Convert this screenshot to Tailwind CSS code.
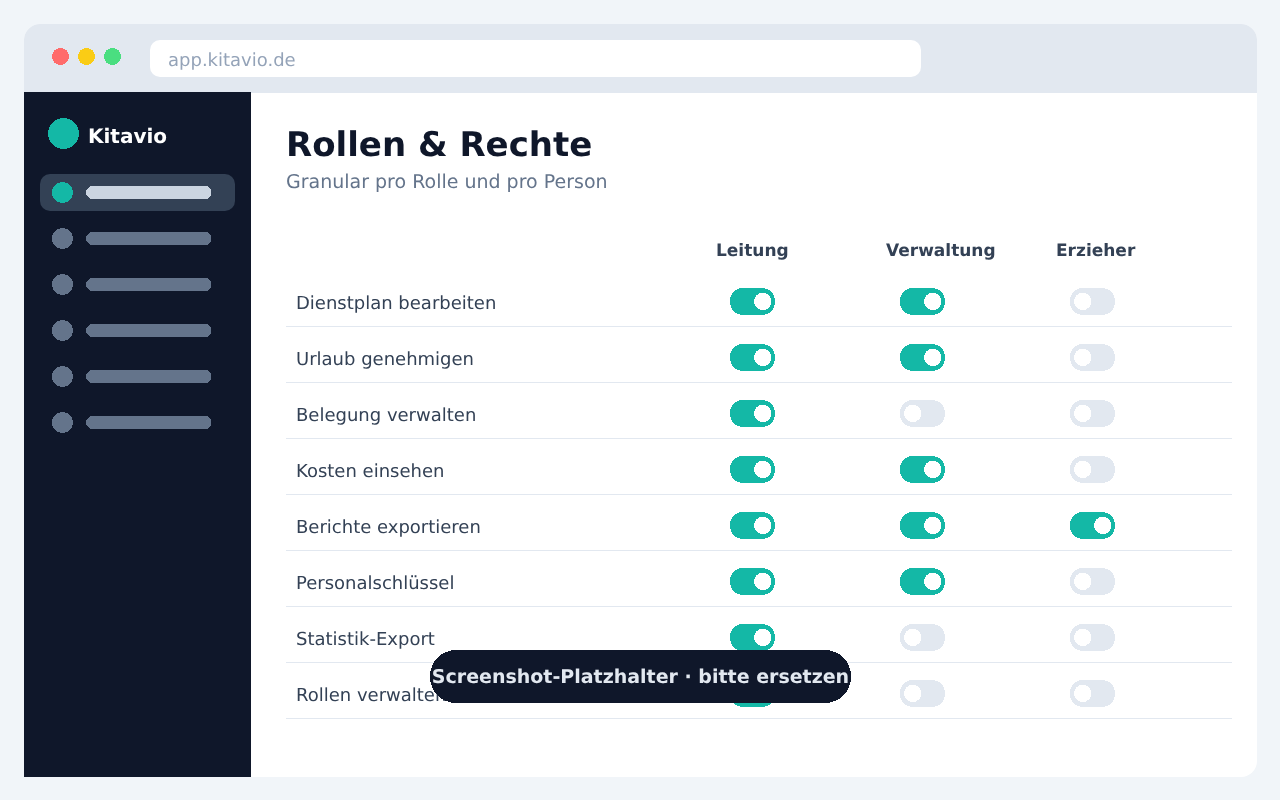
<!DOCTYPE html>
<html lang="de">

<head>
  <meta charset="UTF-8">
  <meta name="viewport" content="width=device-width, initial-scale=1.0">
  <title>Kitavio - Rollen & Rechte</title>
  <script src="https://cdn.jsdelivr.net/npm/@tailwindcss/browser@4"></script>
</head>

<body class="bg-[#f1f5f9] h-[800px] overflow-hidden font-['DejaVu_Sans',sans-serif] [text-rendering:geometricPrecision] antialiased">
  <div class="ml-[24px] mt-[24px] w-[1233px] h-[753px] bg-white rounded-[16px] float-left [will-change:transform]">
    <!-- browser bar -->
    <div class="h-[69px] bg-[#e2e8f0] rounded-t-[16px] flex items-start">
      <svg class="ml-[28px] mt-[24px] [shape-rendering:crispEdges]" width="70" height="17">
        <circle cx="8.5" cy="8.5" r="8.5" fill="#ff6b6b" />
        <circle cx="34.5" cy="8.5" r="8.5" fill="#facc15" />
        <circle cx="60.5" cy="8.5" r="8.5" fill="#4ade80" />
      </svg>
      <div class="ml-[28px] mt-[16px] w-[771px] h-[37px] bg-white rounded-[10px] pl-[18px] text-[18px] leading-[41px] text-[#94a3b8]">app.kitavio.de</div>
    </div>

    <div class="flex h-[684px]">
      <!-- sidebar -->
      <div class="w-[227px] h-[685px] -mt-px bg-[#0f172a] shrink-0 px-[16px]">
        <div class="flex items-start pl-[8px] pt-[26px] h-[82px]">
          <svg class="[shape-rendering:crispEdges]" width="31" height="31"><circle cx="15.5" cy="15.5" r="15.5" fill="#14b8a6" /></svg>
          <div class="ml-[9px] text-[20px] font-bold text-white leading-[31px] mt-[3px]">Kitavio</div>
        </div>
        <div class="flex items-center h-[37px] bg-[#334155] rounded-[10px] pl-[12px] w-[195px]">
          <svg class="[shape-rendering:crispEdges]" width="21" height="21"><circle cx="10.5" cy="10.5" r="10.5" fill="#14b8a6" /></svg>
          <svg class="ml-[13px] [shape-rendering:crispEdges]" width="125" height="13"><polygon points="4,0 121,0 125,4 125,9 121,13 4,13 0,9 0,4" fill="#cbd5e1" /></svg>
        </div>
        <div id="nav" class="mt-[4px] flex flex-col"></div>
      </div>

      <!-- main -->
      <div class="flex-1 pl-[35px] pr-[25px]">
        <h1 class="mt-[31px] text-[34px] leading-[42px] font-bold text-[#0f172a]">Rollen &amp; Rechte</h1>
        <p class="mt-[5px] text-[19px] leading-[22px] text-[#64748b]">Granular pro Rolle und pro Person</p>

        <div class="grid grid-cols-[430px_170px_170px_1fr] mt-[46px] h-[24px] text-[17px] leading-[24px] font-bold text-[#334155]">
          <div></div>
          <div>Leitung</div>
          <div>Verwaltung</div>
          <div>Erzieher</div>
        </div>

        <div id="rows" class="mt-[8px]"></div>
      </div>
    </div>
  </div>

  <!-- placeholder pill -->
  <div class="absolute left-[430px] top-[650px] w-[421px] h-[53px] text-[#e2e8f0] text-[19px] font-bold leading-[55px] text-center whitespace-nowrap [will-change:transform]">
    <svg class="absolute inset-0 [shape-rendering:crispEdges]" width="421" height="53"><rect width="421" height="53" rx="26" fill="#0f172a" /></svg>
    <span class="relative">Screenshot-Platzhalter · bitte ersetzen</span>
  </div>

  <script>
    const permissions = [
      ["Dienstplan bearbeiten", 1, 1, 0],
      ["Urlaub genehmigen", 1, 1, 0],
      ["Belegung verwalten", 1, 0, 0],
      ["Kosten einsehen", 1, 1, 0],
      ["Berichte exportieren", 1, 1, 1],
      ["Personalschlüssel", 1, 1, 0],
      ["Statistik-Export", 1, 0, 0],
      ["Rollen verwalten", 1, 0, 0],
    ];

    const toggle = (on) => `
      <div class="pl-[14px] pt-[17px]">
        <svg class="[shape-rendering:crispEdges]" width="45" height="27">
          <rect width="45" height="27" rx="13" fill="${on ? "#14b8a6" : "#e2e8f0"}" />
          <circle cx="${on ? 32.8 : 12.7}" cy="13.4" r="8.7" fill="#fff" />
        </svg>
      </div>`;

    document.getElementById("rows").innerHTML = permissions.map(([label, a, b, c]) => `
      <div class="grid grid-cols-[430px_170px_170px_1fr] h-[56px] border-b border-[#e2e8f0]">
        <div class="pl-[10px] pt-[21px] text-[18px] leading-[24px] text-[#334155]">${label}</div>
        ${toggle(a)}${toggle(b)}${toggle(c)}
      </div>`).join("");

    document.getElementById("nav").innerHTML = Array(5).fill(`
      <div class="flex items-center h-[46px] pl-[12px]">
        <svg class="[shape-rendering:crispEdges]" width="21" height="21"><circle cx="10.5" cy="10.5" r="10.5" fill="#64748b" /></svg>
        <svg class="ml-[13px] [shape-rendering:crispEdges]" width="125" height="13"><polygon points="4,0 121,0 125,4 125,9 121,13 4,13 0,9 0,4" fill="#64748b" /></svg>
      </div>`).join("");
  </script>
</body>

</html>
